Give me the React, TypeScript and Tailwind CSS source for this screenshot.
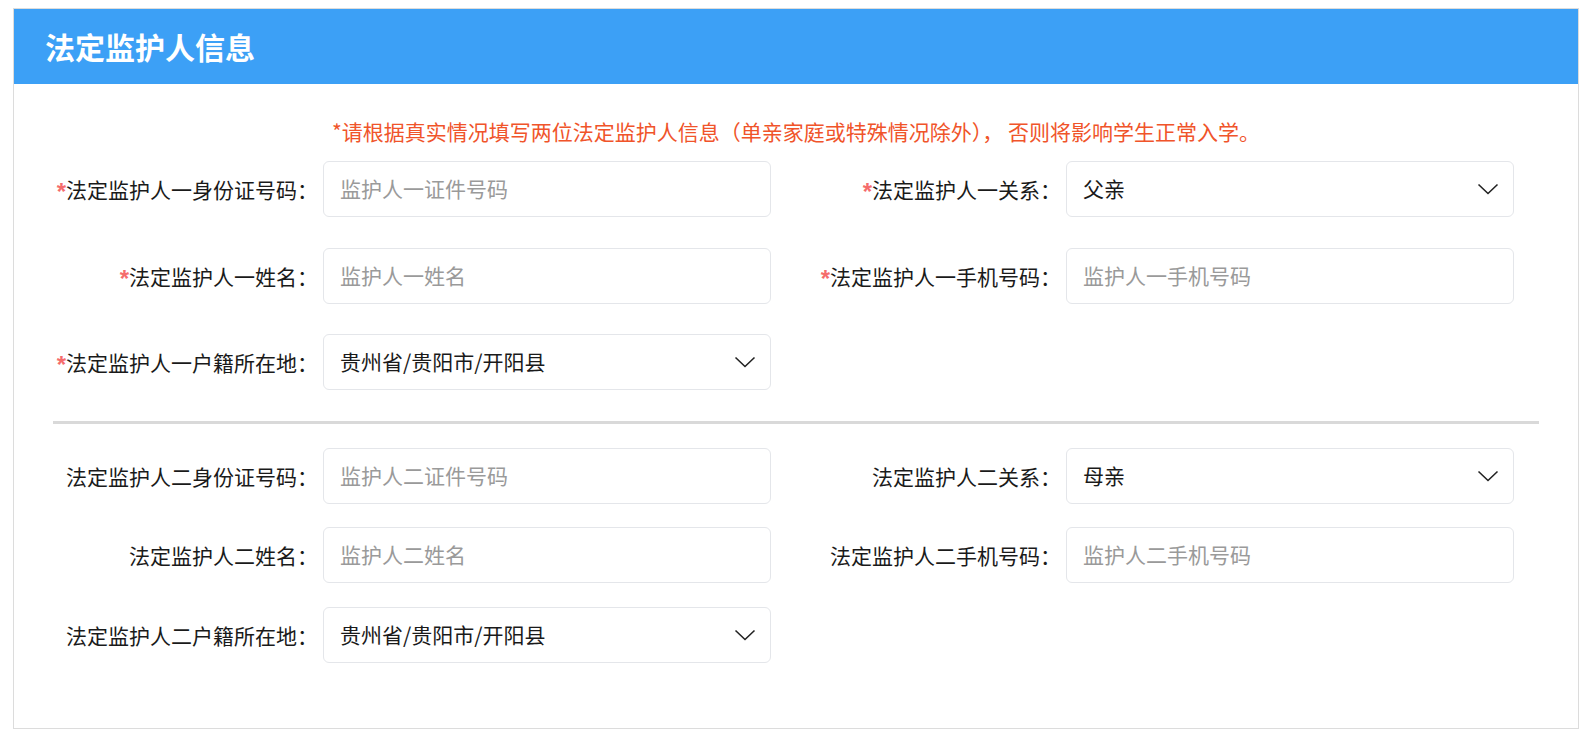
import React from 'react'

const font = { fontFamily: '"Noto Sans CJK SC", "Noto Sans", sans-serif' }

function Chevron() {
  return (
    <svg className="h-[12px] w-[22px]" viewBox="0 0 22 12" fill="none" stroke="#222" strokeWidth={1.6}>
      <path d="M1.5 1.5 L11 10.5 L20.5 1.5" />
    </svg>
  )
}

interface FieldProps {
  label: string
  required?: boolean
  placeholder?: string
  value?: string
  select?: boolean
  labelWidth: string
}

function Field({ label, required, placeholder, value, select, labelWidth }: FieldProps) {
  return (
    <div className="flex items-center">
      <div className={`${labelWidth} shrink-0 text-right text-[21px] leading-[28px] text-[#1a1a1a]`}>
        {required && (
          <span className="relative top-[2px] font-['Liberation_Sans',sans-serif] text-[24px] font-bold text-[#f56c6c]">*</span>
        )}
        {label}：
      </div>
      <div className="ml-[5px] flex h-[56px] w-[448px] items-center justify-between rounded-[6px] border border-[#e4e6ea] bg-white pl-[16px] pr-[14px]">
        {value ? (
          <span className="text-[21px] text-[#1a1a1a]">{value}</span>
        ) : (
          <span className="text-[21px] text-[#9a9a9a]">{placeholder}</span>
        )}
        {select && <Chevron />}
      </div>
    </div>
  )
}

function Row({ children, className = '' }: { children: React.ReactNode; className?: string }) {
  return <div className={`flex ${className}`}>{children}</div>
}

export default function App() {
  return (
    <div className="min-h-screen bg-white pl-[13px] pt-[8px]" style={font}>
      <div className="w-[1566px] border border-[#dcdcdc] bg-white">
        <div className="flex h-[75px] items-center bg-[#3ca0f6] pl-[31px]">
          <h2 className="text-[30px] font-bold text-white">法定监护人信息</h2>
        </div>

        <div className="pb-[65px] pt-[33px]">
          <p className="text-center text-[21px] leading-[28px] text-[#f0542a]">
            *请根据真实情况填写两位法定监护人信息（单亲家庭或特殊情况除外）， 否则将影响学生正常入学。
          </p>

          <Row className="mt-[16px]">
            <Field labelWidth="w-[304px]" required label="法定监护人一身份证号码" placeholder="监护人一证件号码" />
            <Field labelWidth="w-[290px]" required label="法定监护人一关系" value="父亲" select />
          </Row>
          <Row className="mt-[31px]">
            <Field labelWidth="w-[304px]" required label="法定监护人一姓名" placeholder="监护人一姓名" />
            <Field labelWidth="w-[290px]" required label="法定监护人一手机号码" placeholder="监护人一手机号码" />
          </Row>
          <Row className="mt-[30px]">
            <Field labelWidth="w-[304px]" required label="法定监护人一户籍所在地" value="贵州省/贵阳市/开阳县" select />
          </Row>

          <div className="mx-[39px] mb-[24px] mt-[31px] h-[3px] bg-[#d9d9d9]" />

          <Row>
            <Field labelWidth="w-[304px]" label="法定监护人二身份证号码" placeholder="监护人二证件号码" />
            <Field labelWidth="w-[290px]" label="法定监护人二关系" value="母亲" select />
          </Row>
          <Row className="mt-[23px]">
            <Field labelWidth="w-[304px]" label="法定监护人二姓名" placeholder="监护人二姓名" />
            <Field labelWidth="w-[290px]" label="法定监护人二手机号码" placeholder="监护人二手机号码" />
          </Row>
          <Row className="mt-[24px]">
            <Field labelWidth="w-[304px]" label="法定监护人二户籍所在地" value="贵州省/贵阳市/开阳县" select />
          </Row>
        </div>
      </div>
    </div>
  )
}
